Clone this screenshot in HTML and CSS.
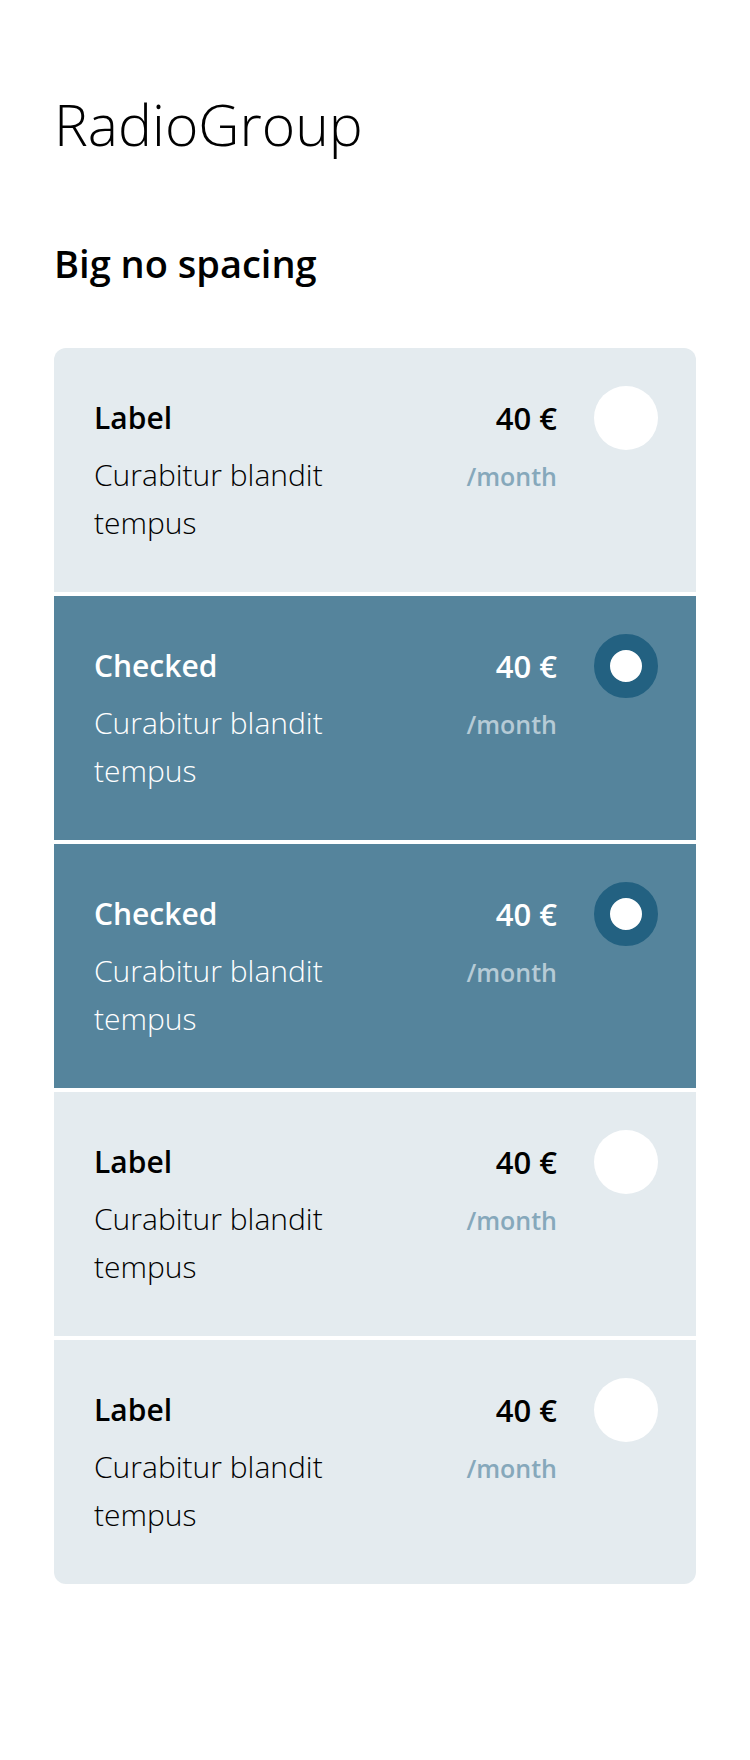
FILE: index.html
```html
<!DOCTYPE html>
<html lang="en">
<head>
<meta charset="utf-8">
<title>RadioGroup</title>
<link rel="stylesheet" href="styles.css">
</head>
<body>
<main class="page">
  <h1 class="title">RadioGroup</h1>
  <h2 class="subtitle">Big no spacing</h2>
  <div class="group" role="radiogroup">
    <label class="option">
      <div class="text">
        <div class="label">Label</div>
        <div class="desc">Curabitur blandit tempus</div>
      </div>
      <div class="price">
        <div class="amount">40 €</div>
        <div class="period">/month</div>
      </div>
      <span class="radio"></span>
    </label>
    <label class="option checked">
      <div class="text">
        <div class="label">Checked</div>
        <div class="desc">Curabitur blandit tempus</div>
      </div>
      <div class="price">
        <div class="amount">40 €</div>
        <div class="period">/month</div>
      </div>
      <span class="radio"></span>
    </label>
    <label class="option checked">
      <div class="text">
        <div class="label">Checked</div>
        <div class="desc">Curabitur blandit tempus</div>
      </div>
      <div class="price">
        <div class="amount">40 €</div>
        <div class="period">/month</div>
      </div>
      <span class="radio"></span>
    </label>
    <label class="option">
      <div class="text">
        <div class="label">Label</div>
        <div class="desc">Curabitur blandit tempus</div>
      </div>
      <div class="price">
        <div class="amount">40 €</div>
        <div class="period">/month</div>
      </div>
      <span class="radio"></span>
    </label>
    <label class="option">
      <div class="text">
        <div class="label">Label</div>
        <div class="desc">Curabitur blandit tempus</div>
      </div>
      <div class="price">
        <div class="amount">40 €</div>
        <div class="period">/month</div>
      </div>
      <span class="radio"></span>
    </label>
  </div>
</main>
</body>
</html>
```

FILE: styles.css
```css
* { box-sizing: border-box; }

html, body {
  margin: 0;
  padding: 0;
  background: #ffffff;
}

body {
  font-family: "Open Sans", "Noto Sans", "Liberation Sans", sans-serif;
  color: #000000;
}

.page {
  width: 750px;
  padding: 84px 54px 0 54px;
}

.title {
  margin: 0;
  font-size: 57px;
  font-weight: 300;
  line-height: 80px;
  letter-spacing: 0;
}

.subtitle {
  margin: 75px 0 0 0;
  font-size: 38px;
  font-weight: 600;
  line-height: 48px;
}

.group {
  margin-top: 61px;
  width: 642px;
  display: flex;
  flex-direction: column;
  gap: 4px;
  border-radius: 12px;
  overflow: hidden;
}

.option {
  display: flex;
  align-items: flex-start;
  background: #e4ebef;
  padding: 38px 38px 38px 40px;
  height: 244px;
}

.option.checked {
  background: #55849c;
  color: #ffffff;
}

.text {
  flex: 1;
  padding-top: 8px;
}

.label {
  font-size: 30px;
  font-weight: 600;
  line-height: 48px;
}

.desc {
  margin-top: 9px;
  width: 280px;
  font-size: 30px;
  font-weight: 300;
  line-height: 48px;
}

.price {
  padding-top: 8px;
  text-align: right;
  margin-right: 37px;
}

.amount {
  font-size: 31px;
  font-weight: 600;
  line-height: 48px;
}

.period {
  margin-top: 10px;
  font-size: 25px;
  font-weight: 600;
  line-height: 48px;
  color: #86a8bb;
}

.checked .period {
  color: #b6cbd6;
}

.radio {
  width: 64px;
  height: 64px;
  flex: none;
  border-radius: 50%;
  background: #ffffff;
}

.checked .radio {
  background: #ffffff;
  border: 16px solid #236181;
}
```
